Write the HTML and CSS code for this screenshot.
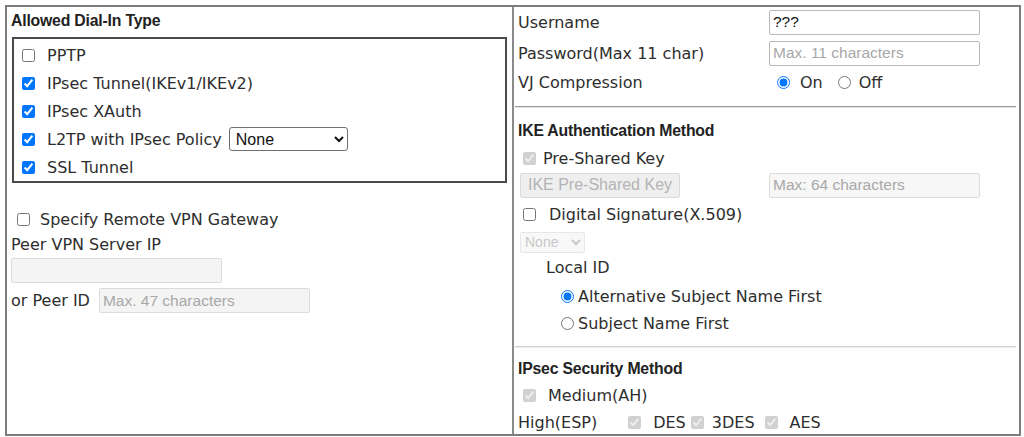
FILE: index.html
```html
<!DOCTYPE html>
<html lang="en">
<head>
<meta charset="utf-8">
<title>Dial-In Settings</title>
<link rel="stylesheet" href="styles.css">
</head>
<body>
<div class="frame">
  <section class="cell cell-left">
    <div class="heading">Allowed Dial-In Type</div>
    <div class="box">
      <label class="opt"><input type="checkbox"><span>PPTP</span></label>
      <label class="opt"><input type="checkbox" checked><span>IPsec Tunnel(IKEv1/IKEv2)</span></label>
      <label class="opt"><input type="checkbox" checked><span>IPsec XAuth</span></label>
      <div class="opt"><input type="checkbox" checked><span>L2TP with IPsec Policy</span><select class="sel-policy"><option>None</option></select></div>
      <label class="opt"><input type="checkbox" checked><span>SSL Tunnel</span></label>
    </div>
    <label class="gw-check"><input type="checkbox"><span>Specify Remote VPN Gateway</span></label>
    <div class="plain">Peer VPN Server IP</div>
    <input class="field field-ip" type="text" disabled>
    <div class="peer-row"><span>or Peer ID</span><input class="field field-peer" type="text" disabled placeholder="Max. 47 characters"></div>
  </section>
  <section class="cell cell-right">
    <div class="form-row"><span class="lbl">Username</span><input class="field field-r" type="text" value="???"></div>
    <div class="form-row form-row-pw"><span class="lbl">Password(Max 11 char)</span><input class="field field-r" type="password" placeholder="Max. 11 characters"></div>
    <div class="form-row form-row-vj"><span class="lbl">VJ Compression</span>
      <label class="radio-on"><input type="radio" name="vj" checked><span>On</span></label>
      <label class="radio-off"><input type="radio" name="vj"><span>Off</span></label>
    </div>
    <div class="rule rule-1"></div>
    <div class="heading heading-r">IKE Authentication Method</div>
    <label class="psk"><input type="checkbox" checked disabled><span>Pre-Shared Key</span></label>
    <div class="psk-row"><button class="btn-psk" type="button" disabled>IKE Pre-Shared Key</button><input class="field field-r field-dis" type="text" disabled placeholder="Max: 64 characters"></div>
    <label class="ds"><input type="checkbox"><span>Digital Signature(X.509)</span></label>
    <div class="ds-sel-row"><select class="sel-ds" disabled><option>None</option></select></div>
    <div class="local-id">Local ID</div>
    <label class="lid-opt lid-alt"><input type="radio" name="lid" checked><span>Alternative Subject Name First</span></label>
    <label class="lid-opt lid-sub"><input type="radio" name="lid"><span>Subject Name First</span></label>
    <div class="rule rule-2"></div>
    <div class="heading heading-r heading-ipsec">IPsec Security Method</div>
    <label class="medium"><input type="checkbox" checked disabled><span>Medium(AH)</span></label>
    <div class="high-row"><span>High(ESP)</span>
      <label class="enc enc-des"><input type="checkbox" checked disabled><span>DES</span></label>
      <label class="enc enc-3des"><input type="checkbox" checked disabled><span>3DES</span></label>
      <label class="enc enc-aes"><input type="checkbox" checked disabled><span>AES</span></label>
    </div>
  </section>
</div>
</body>
</html>
```

FILE: styles.css
```css
html, body {
  margin: 0;
  padding: 0;
  background: #fff;
}
body {
  font-family: "DejaVu Sans", "Noto Sans", sans-serif;
  font-size: 16px;
  color: #2e2e2e;
  overflow: hidden;
}
input, select, button {
  font-family: "Liberation Sans", Arial, sans-serif;
}
input[type="checkbox"], input[type="radio"] {
  width: 13px;
  height: 13px;
  margin: 0;
  flex: none;
}
.frame {
  margin: 5px 0 0 5px;
  width: 1016px;
  height: 431px;
  box-sizing: border-box;
  border: 2px solid #7d7d7d;
  display: grid;
  grid-template-columns: 507px 1fr;
  overflow: hidden;
}
.cell {
  display: flex;
  flex-direction: column;
  align-items: flex-start;
  min-width: 0;
}
.cell-left {
  border-right: 2px solid #8a8a8a;
}
.heading {
  font-family: "Liberation Sans", Arial, sans-serif;
  font-weight: bold;
  font-size: 15.8px;
  letter-spacing: -0.2px;
  line-height: 20px;
  padding: 4px 0 0 4px;
  color: #222;
}
.box {
  align-self: stretch;
  margin: 6px 5px 0 5px;
  border: 2px solid #4a4a4a;
  padding: 2px 0 0 0;
  height: 146px;
  box-sizing: border-box;
}
.opt {
  display: flex;
  align-items: center;
  height: 28px;
  padding-left: 8px;
}
.opt input {
  margin-right: 12px;
}
.sel-policy {
  margin-left: 7px;
  width: 119px;
  height: 24px;
  font-size: 16px;
  border: 1px solid #6f6f6f;
  border-radius: 3px;
  background: #fff;
  color: #111;
  padding: 0 2px;
}
.gw-check {
  display: flex;
  align-items: center;
  height: 28px;
  margin-top: 22px;
  padding-left: 10px;
}
.gw-check input {
  margin-right: 10px;
}
.plain {
  height: 20px;
  line-height: 20px;
  padding: 2px 0 0 4px;
}
.field {
  box-sizing: border-box;
  height: 25px;
  border: 1px solid #b8b8b8;
  border-radius: 2px;
  padding: 0 3px;
  font-size: 15.5px;
  color: #111;
  background: #fff;
}
.field::placeholder {
  color: #a8a8a8;
}
.field:disabled {
  background: #f4f4f4;
  border-color: #dcdcdc;
}
.field-ip {
  margin: 3px 0 0 4px;
  width: 211px;
}
.peer-row {
  display: flex;
  align-items: center;
  margin-top: 5px;
  height: 25px;
  padding-left: 4px;
}
.field-peer {
  margin-left: 9px;
  width: 211px;
}
.form-row {
  display: flex;
  align-items: center;
  height: 30px;
  align-self: stretch;
}
.form-row-pw {
  height: 31px;
  padding-top: 1px;
  box-sizing: border-box;
}
.form-row-vj {
  height: 29px;
}
.lbl {
  width: 251px;
  padding-left: 4px;
  flex: none;
}
.field-r {
  width: 211px;
}
.field-dis:disabled {
  background: #f7f7f7;
}
.radio-on, .radio-off {
  display: flex;
  align-items: center;
}
.radio-on input {
  margin: 0 10px 0 8px;
}
.radio-off input {
  margin: 0 8px 0 15px;
}
.rule {
  align-self: stretch;
  margin: 0 3px 0 1px;
  height: 0;
}
.rule-1 {
  margin-top: 9px;
  border-top: 1px solid #9a9a9a;
  border-bottom: 1px solid #e4e4e4;
}
.rule-2 {
  margin-top: 9px;
  border-top: 1px solid #cfcfcf;
  border-bottom: 1px solid #efefef;
}
.heading-r {
  padding: 0 0 0 4px;
  margin-top: 10px;
  height: 26px;
  line-height: 26px;
}
.heading-ipsec {
  margin-top: 8px;
}
.psk {
  display: flex;
  align-items: center;
  height: 28px;
  padding-left: 9px;
}
.psk input {
  margin-right: 7px;
}
.psk-row {
  display: flex;
  align-items: center;
  height: 26px;
  align-self: stretch;
}
.btn-psk {
  margin-left: 6px;
  width: 160px;
  height: 25px;
  font-size: 16px;
  color: #b4b4b4;
  background: #efefef;
  border: 1px solid #dadada;
  border-radius: 2px;
  padding: 0;
  margin-right: 89px;
}
.ds {
  display: flex;
  align-items: center;
  height: 32px;
  padding-left: 9px;
}
.ds input {
  margin-right: 13px;
}
.ds-sel-row {
  height: 24px;
  display: flex;
  align-items: center;
}
.sel-ds {
  margin-left: 6px;
  width: 65px;
  height: 21px;
  font-size: 14px;
  color: #b0b0b0;
  background: #f6f6f6;
  border: 1px solid #dedede;
  border-radius: 2px;
  padding: 0;
}
.local-id {
  height: 28px;
  line-height: 28px;
  padding-left: 32px;
}
.lid-opt {
  display: flex;
  align-items: center;
  height: 28px;
  padding-left: 47px;
}
.lid-sub {
  height: 27px;
}
.lid-opt input {
  margin-right: 4px;
}
.medium {
  display: flex;
  align-items: center;
  height: 27px;
  padding-left: 9px;
}
.medium input {
  margin-right: 12px;
}
.high-row {
  display: flex;
  align-items: center;
  height: 26px;
  padding-left: 4px;
}
.enc {
  display: flex;
  align-items: center;
}
.enc-des input {
  margin: 0 12px 0 31px;
}
.enc-3des input {
  margin: 0 8px 0 5px;
}
.enc-aes input {
  margin: 0 12px 0 10px;
}
```
